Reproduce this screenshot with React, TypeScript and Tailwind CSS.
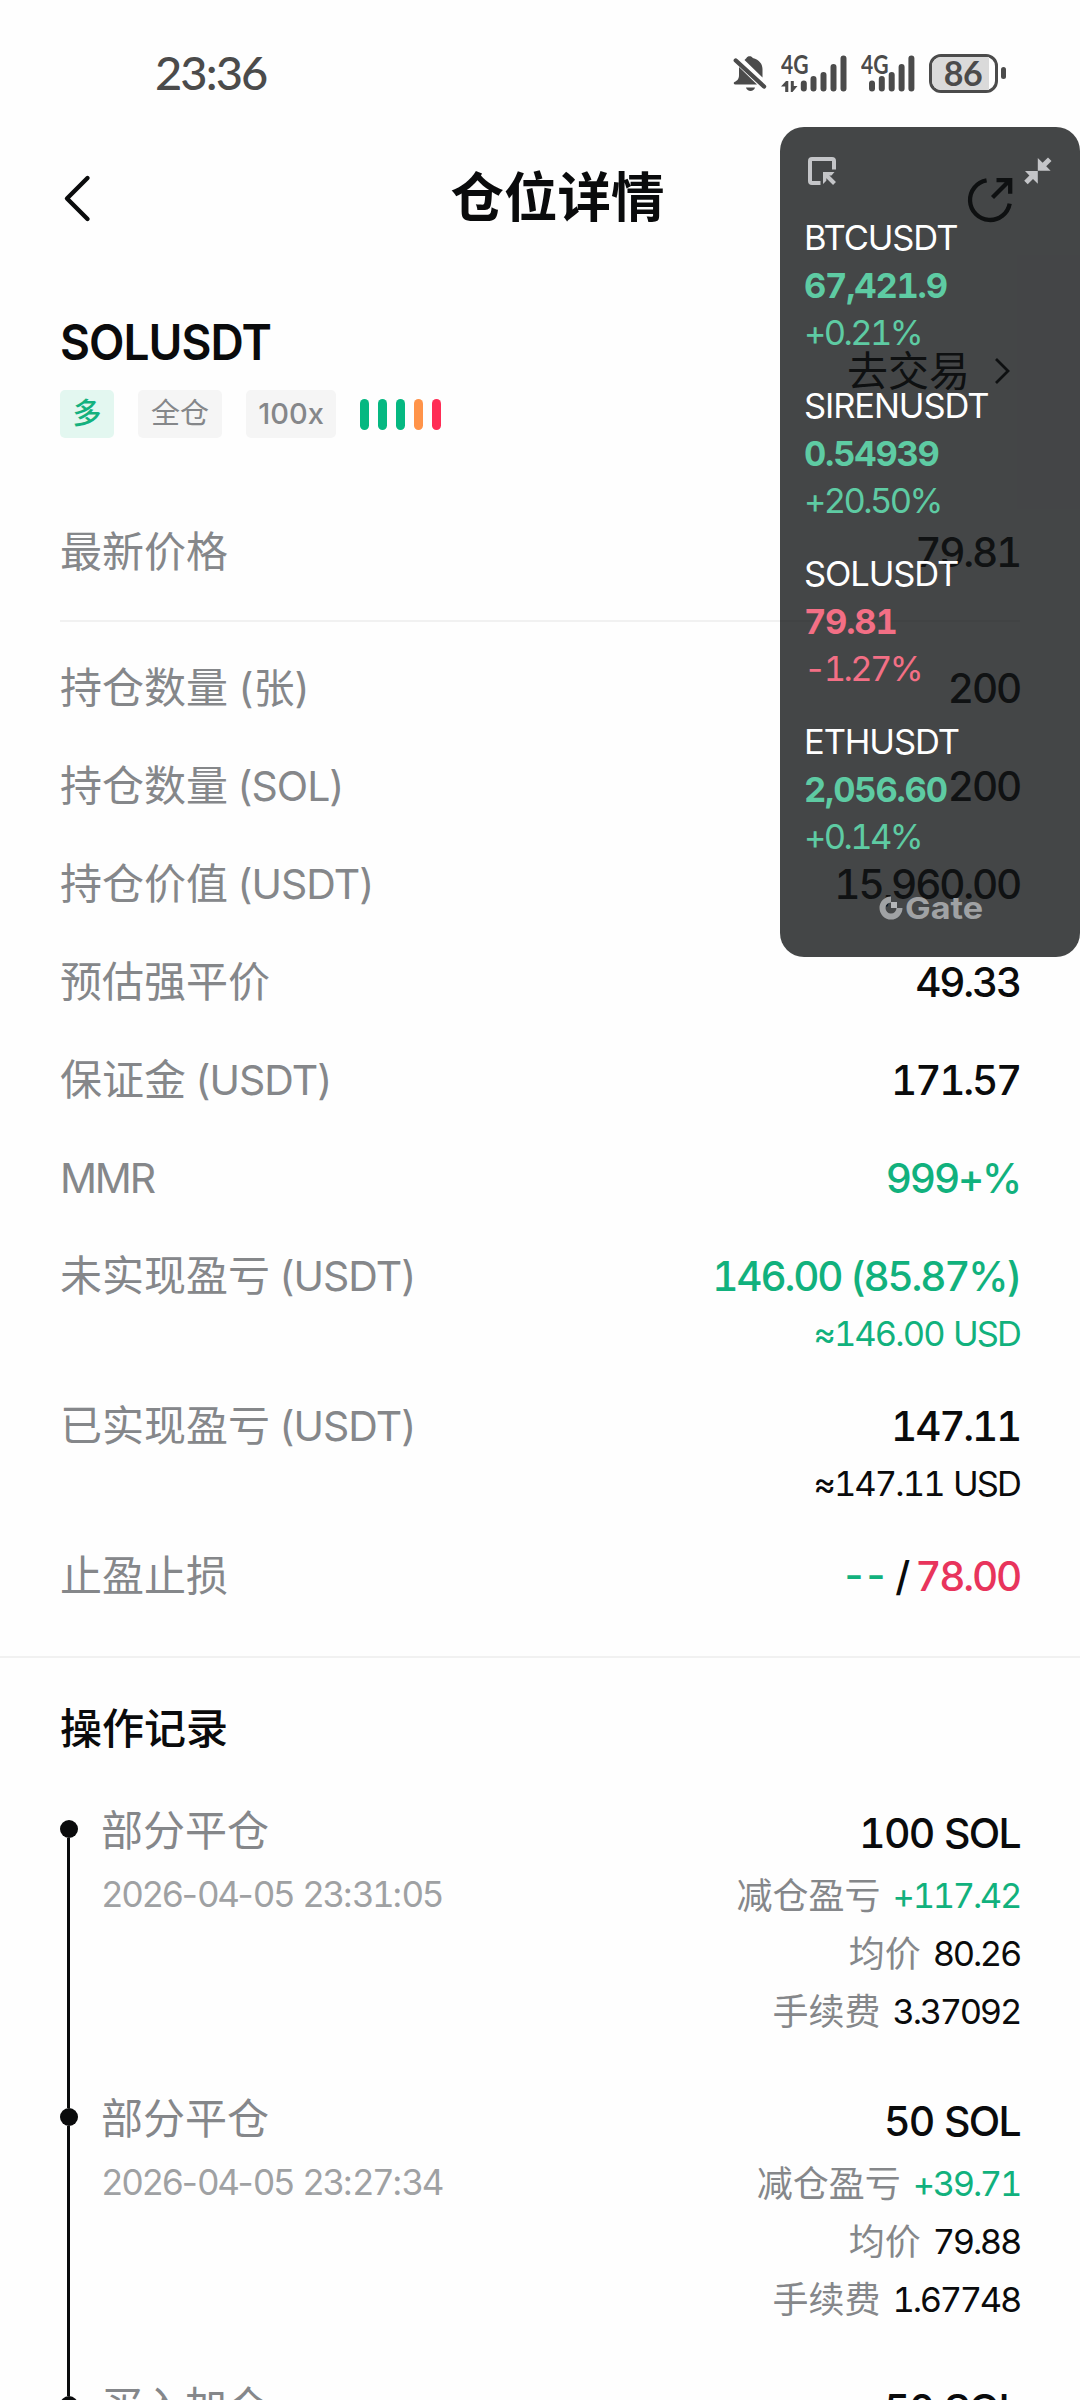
import type { ReactNode } from 'react';

const GREEN = 'text-[#11b17d]';
const RED = 'text-[#e8345c]';

function Bell() {
  return (
    <svg className="h-[38px] w-[34px]" viewBox="0 0 34 38" fill="#4b4b4b">
      <path d="M13.500 4c.8-2.200 5.400-2.200 6.200 0C26.500 6 29.500 10 29.500 15v8.500L11.500 6z" />
      <path d="M6 13 24 30.500H2.500C.5 30.500.3 28.500 1.500 28c3-1.500 4.500-3 4.500-7z" />
      <path d="M13 33.500h9c-1 4.500-8 4.500-9 0z" />
      <path d="M2.800 6.500 31 32.500" stroke="#4b4b4b" strokeWidth="4.400" strokeLinecap="round" />
    </svg>
  );
}

function Signal({ data }: { data?: boolean }) {
  return (
    <div className="relative h-[37px] w-[66px] text-[#4b4b4b]">
      <span className="absolute top-[-1px] left-0 origin-left scale-x-[0.78] font-['Lato'] text-[27px] leading-[20px] font-bold">
        4G
      </span>
      <svg className="absolute inset-0 h-full w-full" viewBox="0 0 66 37" stroke="#4b4b4b">
        {data ? (
          <>
            <g stroke="none" fill="#4b4b4b">
              <path d="M0 31.500 5 26h2.300v11H4.200v-5.500z" />
              <path d="M9.800 26h3v5h3.700L11.500 37H9.800z" />
            </g>
            <path
              d="M22.800 28.500v5M32.500 24v9.500M42.500 20v13.500M52.500 12v21.500M62.500 3.500v30"
              strokeWidth="6"
              strokeLinecap="round"
            />
          </>
        ) : (
          <path
            d="M11 28.500v5M20.800 24v9.500M30.700 20v13.500M40.600 12v21.500M50.400 3.500v30"
            strokeWidth="6"
            strokeLinecap="round"
          />
        )}
      </svg>
    </div>
  );
}

function Battery() {
  return (
    <div className="flex items-center">
      <div className="relative h-[39px] w-[69px] rounded-[12px] border-[3px] border-[#4b4b4b]">
        <div className="h-full w-[57px] rounded-l-[9px] bg-[#dadada]" />
        <span className="absolute inset-0 pr-[1px] text-center font-['Lato'] text-[34px] leading-[31px] font-bold tracking-[-0.5px] text-[#4b4b4b]">
          86
        </span>
      </div>
      <div className="ml-[3px] h-[12px] w-[5px] rounded-[2.500px] bg-[#4b4b4b]" />
    </div>
  );
}

function StatusBar() {
  return (
    <div className="flex h-[120px] items-center pt-[25px] pl-[155px]">
      <span className="font-['Lato'] text-[47px] leading-[47px] font-medium tracking-[-1.900px] text-[#4b4b4b]">23:36</span>
      <div className="absolute top-[53px] left-[733px] flex h-[40px] items-center">
        <Bell />
        <div className="ml-[14px] flex">
          <Signal data />
          <div className="ml-[14px]">
            <Signal />
          </div>
        </div>
        <div className="ml-[2px]">
          <Battery />
        </div>
      </div>
    </div>
  );
}

function Header() {
  return (
    <div className="relative flex h-[157px] items-center justify-center">
      <svg className="absolute top-[54px] left-[60px] h-[50px] w-[36px]" viewBox="0 0 36 50" fill="none">
        <path d="M27.500 4 7 24.500 27.500 45" stroke="#0a0b0c" strokeWidth="4.400" strokeLinecap="round" strokeLinejoin="round" />
      </svg>
      <h1 className="pb-[2px] pl-[35px] text-[53.500px] leading-[60px] font-bold text-[#0a0b0c]">仓位详情</h1>
      <svg className="absolute top-[55px] right-[65px] h-[50px] w-[50px]" viewBox="0 0 50 50" fill="none" stroke="#000" strokeWidth="4.300">
        <path d="M21.600 5.300a20 20 0 1 0 23.100 23.300" />
        <path d="M27.500 22.500 44 6M31.500 5.200h13.700v13.600" />
      </svg>
    </div>
  );
}

const RISK = ['bg-[#05b881]', 'bg-[#05b881]', 'bg-[#05b881]', 'bg-[#ff9349]', 'bg-[#ff2c55]'];

function Symbol() {
  return (
    <div className="mt-[25px] h-[136px] px-[60px]">
      <div className="flex h-[80px] items-center justify-between">
        <h2 className="origin-left scale-x-[0.94] pt-[2px] text-[49px] leading-[60px] font-semibold tracking-[-1px] text-[#0a0b0c]">
          SOLUSDT
        </h2>
        <div className="mt-[58px] mr-[10px] flex items-center gap-[24px]">
          <span className="text-[41px] leading-[48px] text-black">去交易</span>
          <svg className="h-[28px] w-[16px]" viewBox="0 0 16 28" fill="none">
            <path d="m2 2 12 12L2 26" stroke="#000" strokeWidth="2.800" />
          </svg>
        </div>
      </div>
      <div className="mt-[8px] flex h-[48px] items-center text-[29px] leading-[48px] text-[#85878a]">
        <span className="h-[48px] w-[54px] rounded-[5px] bg-[#e3f7f0] text-center font-medium text-[#14b17e]">多</span>
        <span className="ml-[24px] h-[48px] w-[84px] rounded-[5px] bg-[#f5f5f5] text-center">全仓</span>
        <span className="ml-[24px] h-[48px] w-[90px] rounded-[5px] bg-[#f5f5f5] text-center font-medium">100x</span>
        <div className="ml-[24px] flex gap-[9px]">
          {RISK.map((c, i) => (
            <i key={i} className={`h-[31px] w-[9px] rounded-full ${c}`} />
          ))}
        </div>
      </div>
    </div>
  );
}

function Label({ cjk, unit, unitTracking = 'tracking-[-1px]' }: { cjk?: string; unit?: string; unitTracking?: string }) {
  return (
    <span className="text-[42px] leading-[50px] text-[#85878a]">
      {cjk}
      {unit && (
        <span className={`text-[41px] [word-spacing:-1px] whitespace-pre ${unitTracking}`}>{cjk ? ` ${unit}` : unit}</span>
      )}
    </span>
  );
}

function Value({ children, className = 'text-[#0a0b0c]' }: { children: ReactNode; className?: string }) {
  return (
    <span className={`pt-[2px] text-[40.500px] leading-[50px] font-medium tracking-[-2.200px] tabular-nums ${className}`}>
      {children}
    </span>
  );
}

function Row({
  cjk,
  unit,
  unitTracking,
  children,
}: {
  cjk?: string;
  unit?: string;
  unitTracking?: string;
  children: ReactNode;
}) {
  return (
    <div className="flex h-[98px] items-center justify-between px-[60px]">
      <Label cjk={cjk} unit={unit} unitTracking={unitTracking} />
      {children}
    </div>
  );
}

function PnlRow({ cjk, value, sub, className }: { cjk: string; value: string; sub: string; className: string }) {
  return (
    <div className="flex h-[150px] justify-between px-[60px] pt-[24px]">
      <Label cjk={cjk} unit="(USDT)" />
      <div className="mt-[-1px] flex flex-col items-end">
        <Value className={className}>{value}</Value>
        <span className={`text-[34.500px] leading-[64px] tracking-[-1.900px] [word-spacing:2px] tabular-nums ${className}`}>
          {sub}
        </span>
      </div>
    </div>
  );
}

interface Operation {
  title: string;
  time: string;
  amount: string;
  pnl?: string;
  price: string;
  fee: string;
}

const OPERATIONS: Operation[] = [
  { title: '部分平仓', time: '2026-04-05 23:31:05', amount: '100 SOL', pnl: '+117.42', price: '80.26', fee: '3.37092' },
  { title: '部分平仓', time: '2026-04-05 23:27:34', amount: '50 SOL', pnl: '+39.71', price: '79.88', fee: '1.67748' },
  { title: '买入加仓', time: '', amount: '50 SOL', price: '', fee: '' },
];

/* Fixed-width digits, proportional separators. */
function Timestamp({ value }: { value: string }) {
  return (
    <span className="text-[35px] leading-[76px] tracking-[-0.800px] whitespace-pre text-[#9fa1a3]">
      {value.split(/([-: ])/).map((part, i) =>
        i % 2 ? (
          part
        ) : (
          <span key={i} className="tracking-[-2.500px] tabular-nums">
            {part}
          </span>
        ),
      )}
    </span>
  );
}

function Detail({ label, value, className = 'text-[#0a0b0c]' }: { label: string; value: string; className?: string }) {
  return (
    <div className="flex h-[58px] items-center gap-[12px] text-[36px] leading-[58px] text-[#85878a]">
      <span>{label}</span>
      <span className={`text-[34.500px] tracking-[-2.300px] tabular-nums ${className}`}>{value}</span>
    </div>
  );
}

function OperationItem({ op, first }: { op: Operation; first: boolean }) {
  return (
    <div className="flex h-[288px] shrink-0 px-[60px]">
      <div className="flex w-[18px] flex-col items-center">
        <div className={first ? 'h-[22px]' : 'mr-[1px] h-[22px] w-[3px] bg-[#0a0b0c]'} />
        <div className="size-[18px] shrink-0 rounded-full bg-[#0a0b0c]" />
        <div className="mr-[1px] w-[3px] flex-1 bg-[#0a0b0c]" />
      </div>
      <div className="ml-[23px] flex flex-1 flex-col pt-[8px]">
        <Label cjk={op.title} />
        <Timestamp value={op.time} />
      </div>
      <div className="flex flex-col items-end pt-[8px]">
        <span className="mb-[7px] text-[41px] leading-[54px] font-medium tracking-[-1.700px] text-[#0a0b0c] [word-spacing:1px] tabular-nums">
          {op.amount}
        </span>
        {op.pnl && <Detail label="减仓盈亏" value={op.pnl} className={GREEN} />}
        {op.price && <Detail label="均价" value={op.price} />}
        {op.fee && <Detail label="手续费" value={op.fee} />}
      </div>
    </div>
  );
}

const TICKERS = [
  { symbol: 'BTCUSDT', price: '67,421.9', change: '+0.21%', color: 'text-[#5ecba3]' },
  { symbol: 'SIRENUSDT', price: '0.54939', change: '+20.50%', color: 'text-[#5ecba3]' },
  { symbol: 'SOLUSDT', price: '79.81', change: '-1.27%', color: 'text-[#f36f85]' },
  { symbol: 'ETHUSDT', price: '2,056.60', change: '+0.14%', color: 'text-[#5ecba3]' },
];

function FloatingTicker() {
  return (
    <div className="absolute top-[127px] left-[780px] h-[830px] w-[300px] rounded-[24px] bg-[#121416]/79">
      <div className="flex justify-between px-[28px] pt-[30px]">
        <svg className="h-[28px] w-[28px]" viewBox="0 0 28 28" fill="none" stroke="#c4c5c8" strokeWidth="4">
          <path d="M26 12.500V4a2 2 0 0 0-2-2H4a2 2 0 0 0-2 2v20a2 2 0 0 0 2 2h8.500" />
          <path d="m17.500 17.500 9 9" />
          <path d="M15 15h11.500l-3 3.500-5 .2-.2 5L15 27z" fill="#c4c5c8" stroke="none" />
        </svg>
        <svg className="h-[28px] w-[28px]" viewBox="0 0 28 28" fill="#c4c5c8">
          <path d="M13.800 1v12.800h12.800L22.200 9.300 27.500 4 24 .5l-5.400 5.300z" />
          <path d="M13.800 26.800V14H1l4.400 4.500L.2 23.700l3.500 3.500 5.300-5.300z" />
        </svg>
      </div>
      <div className="mt-[29px] flex flex-col gap-[24px] pl-[24px]">
        {TICKERS.map((t) => (
          <div key={t.symbol} className="flex h-[144px] flex-col text-[34.500px] leading-[48px]">
            <span className="tracking-[-1.100px] text-white">{t.symbol}</span>
            <span className={`font-bold tracking-[-1.200px] tabular-nums ${t.color}`}>{t.price}</span>
            <span className={`leading-[45px] tracking-[-2.600px] tabular-nums ${t.color}`}>{t.change}</span>
          </div>
        ))}
      </div>
      <div className="absolute top-[765px] left-[99px] flex h-[32px] items-center text-[#a0a2a4]">
        <svg className="h-[24px] w-[24px]" viewBox="0 0 24 24" fill="none">
          <path d="M12 3.500a8.500 8.500 0 1 0 8.500 8.500" stroke="#a0a2a4" strokeWidth="6" />
          <path d="M12 6h6v6h-6z" fill="#b4b6b8" />
        </svg>
        <span className="ml-[2px] origin-left scale-x-[1.14] text-[30px] leading-[32px] font-bold">Gate</span>
      </div>
    </div>
  );
}

export default function App() {
  return (
    <div className="relative h-[2400px] w-[1080px] overflow-hidden bg-[#fefefe] font-['Inter','Noto_Sans_CJK_SC',sans-serif]">
      <StatusBar />
      <Header />
      <Symbol />
      <div className="mt-[65px] mb-[19px]">
        <Row cjk="最新价格">
          <Value>79.81</Value>
        </Row>
      </div>
      <div className="mx-[60px] mb-[17px] h-[2px] bg-[#f1f1f1]" />
      <Row cjk="持仓数量" unit="(张)" unitTracking="tracking-[0px]">
        <Value>200</Value>
      </Row>
      <Row cjk="持仓数量" unit="(SOL)">
        <Value>200</Value>
      </Row>
      <Row cjk="持仓价值" unit="(USDT)">
        <Value>15,960.00</Value>
      </Row>
      <Row cjk="预估强平价">
        <Value>49.33</Value>
      </Row>
      <Row cjk="保证金" unit="(USDT)">
        <Value>171.57</Value>
      </Row>
      <Row unit="MMR" unitTracking="tracking-[-2.200px]">
        <Value className={GREEN}>999+%</Value>
      </Row>
      <PnlRow cjk="未实现盈亏" value="146.00 (85.87%)" sub="≈146.00 USD" className={GREEN} />
      <PnlRow cjk="已实现盈亏" value="147.11" sub="≈147.11 USD" className="text-[#0a0b0c]" />
      <Row cjk="止盈止损">
        <div className="flex gap-[7px]">
          <span className={`text-[41px] leading-[50px] font-medium tracking-[3px] ${GREEN}`}>--</span>
          <Value>/</Value>
          <Value className={RED}>78.00</Value>
        </div>
      </Row>
      <div className="mt-[31px] h-[2px] bg-[#f1f1f1]" />
      <h3 className="px-[60px] text-[42px] leading-[142px] font-medium text-[#0a0b0c]">操作记录</h3>
      <div className="mt-[-2px] flex flex-col">
        {OPERATIONS.map((op, i) => (
          <OperationItem key={i} op={op} first={i === 0} />
        ))}
      </div>
      <FloatingTicker />
    </div>
  );
}
